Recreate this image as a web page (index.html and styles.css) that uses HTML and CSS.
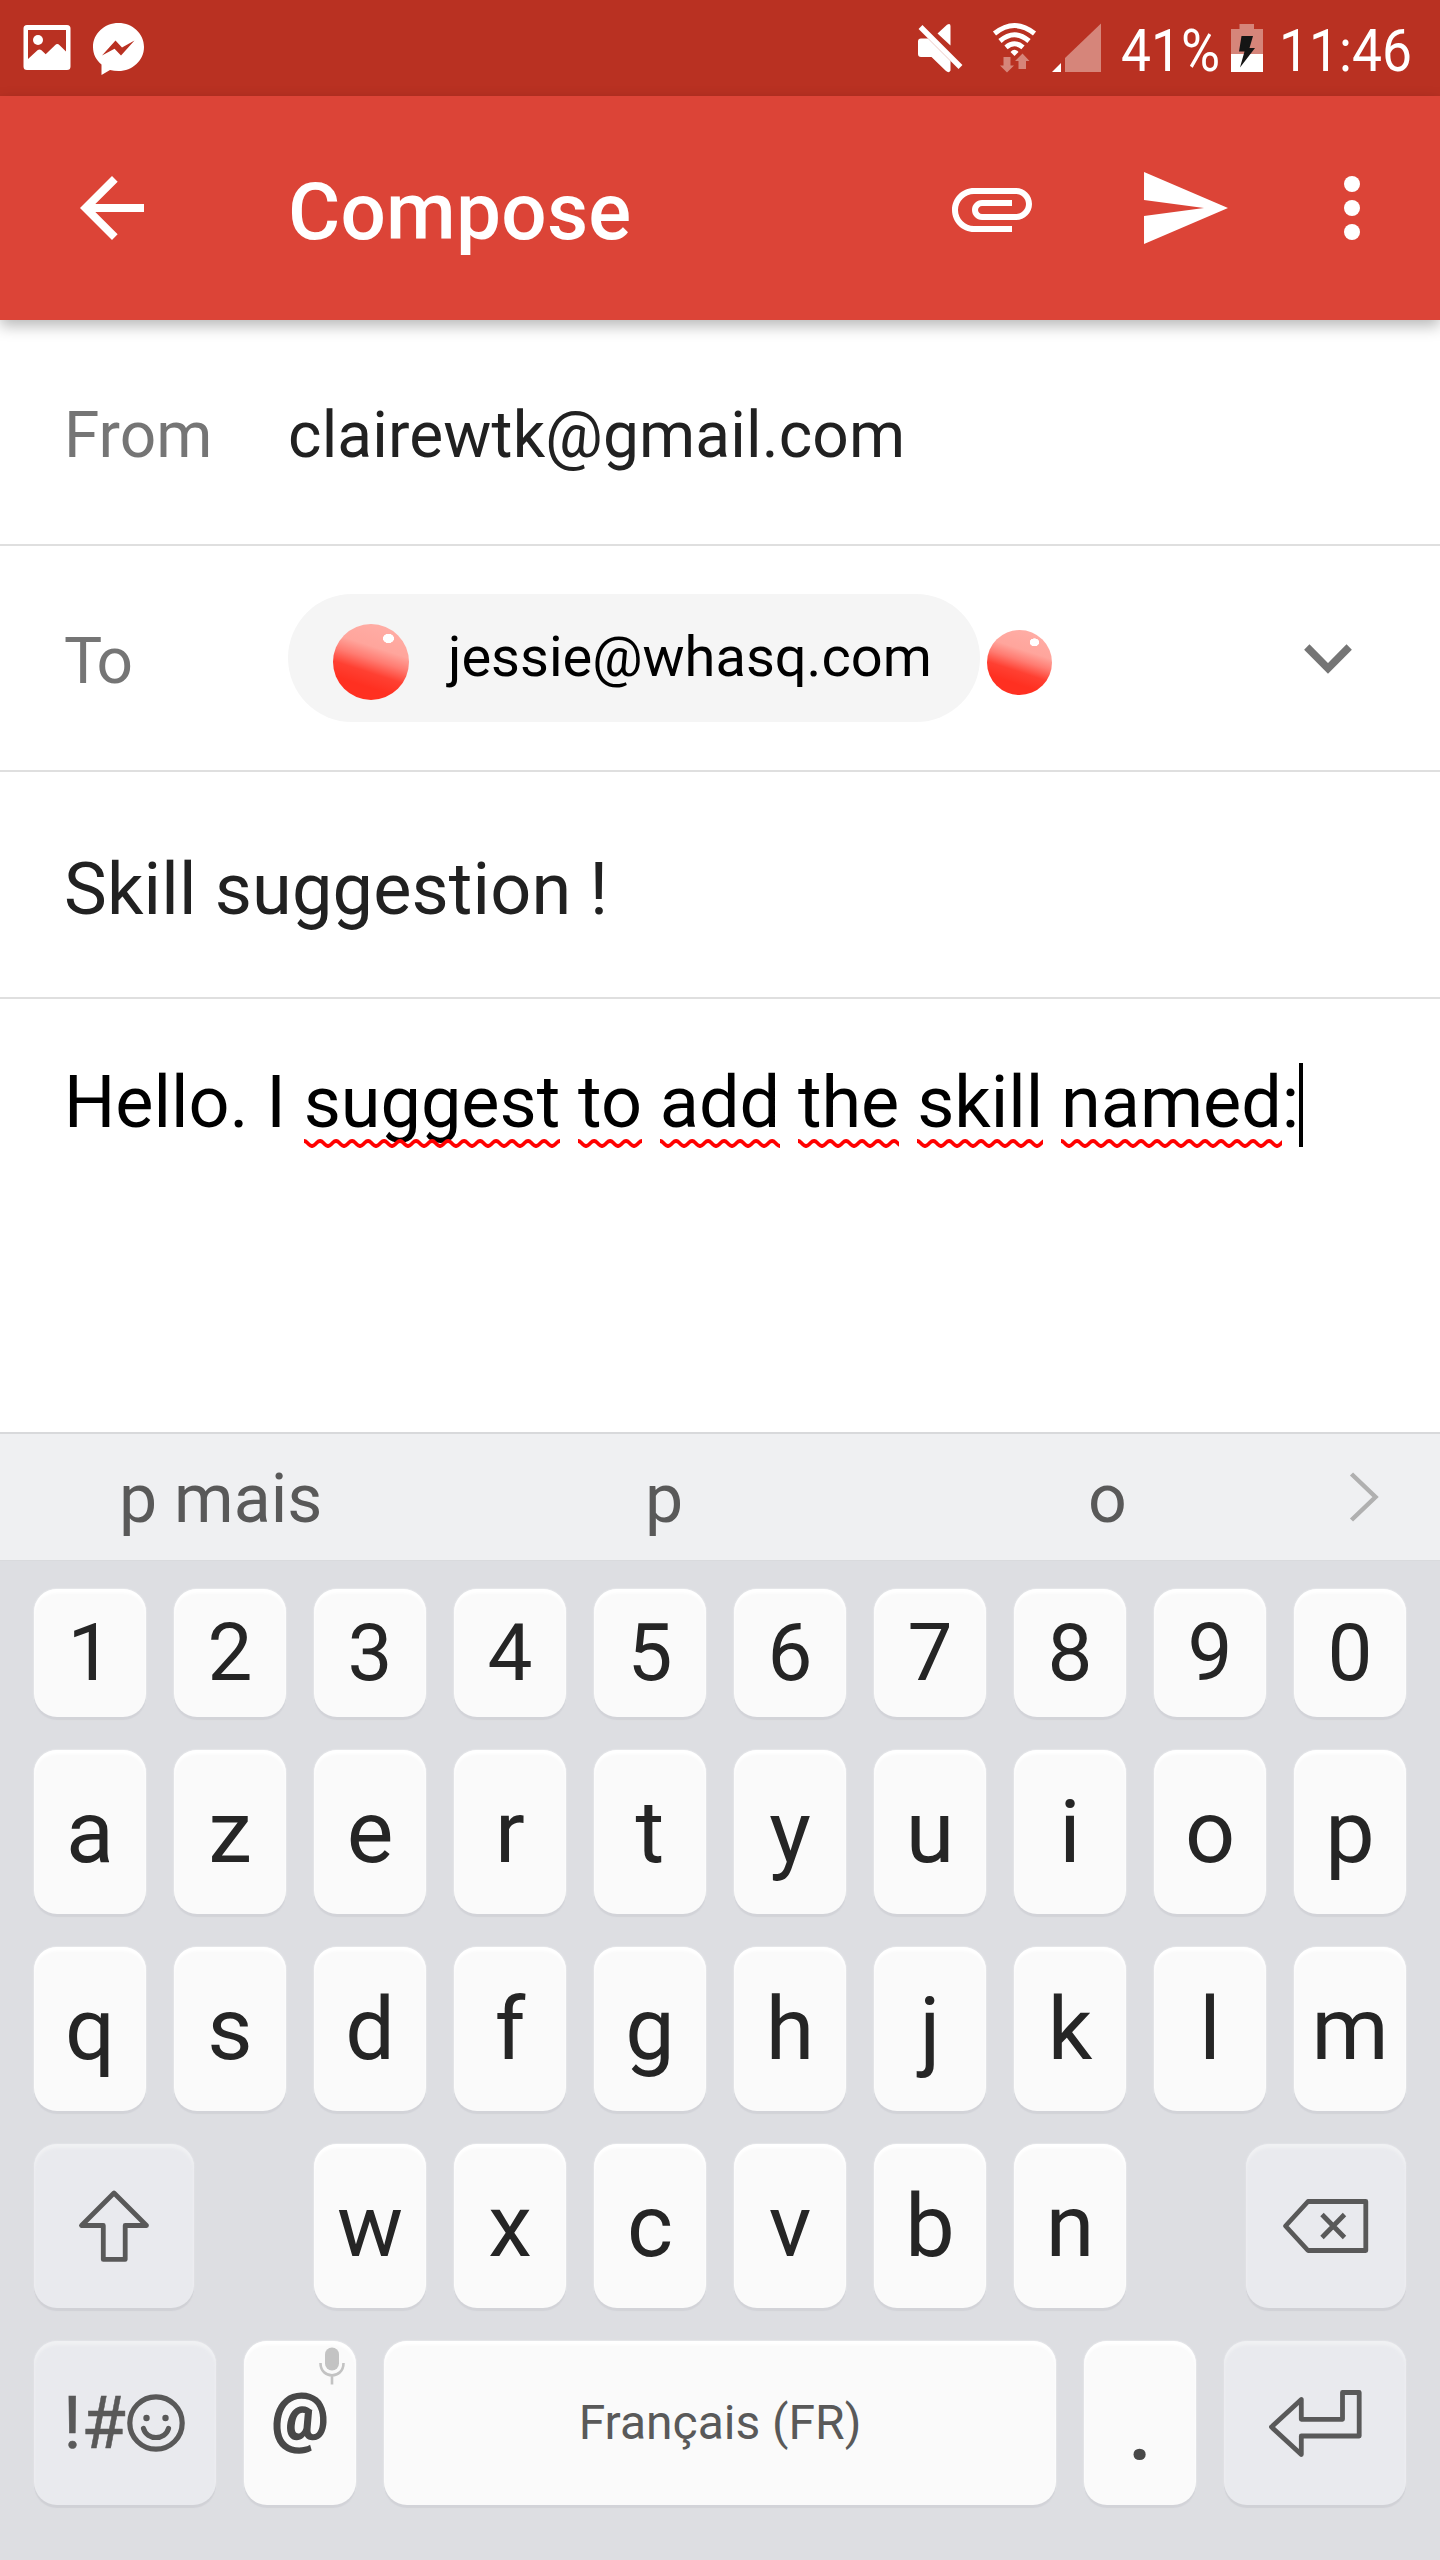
FILE: index.html
```html
<!DOCTYPE html>
<html lang="en">
<head>
<meta charset="utf-8">
<title>Compose</title>
<link rel="stylesheet" href="styles.css">
</head>
<body>
<div class="screen">
  <header class="status">
    <svg class="status-left" width="160" height="96" viewBox="0 0 160 96" fill="#fff">
      <path fill-rule="evenodd" d="M27 25H67a3.500 3.500 0 0 1 3.500 3.500V66.500a3.500 3.500 0 0 1-3.500 3.500H27a3.500 3.500 0 0 1-3.500-3.500V28.500A3.500 3.500 0 0 1 27 25zM28 30V59L37.500 50.200Q39.500 48.700 41.500 50.200L45.700 54.300L55 45.200Q57.300 43 59.600 45.200L66 51.500V30z"/>
      <circle cx="38" cy="40" r="5"/>
      <path fill-rule="evenodd" d="M118.500 23C132.500 23 144 33.500 144 47S132.500 71 118.500 71Q114 71 110 70L101.500 75V64.500C96 60 93 54 93 47C93 33.500 104.500 23 118.500 23zM102 55.500L115.500 40.500L122 47.500L134.500 40.500L121 55.500L114.500 48.700z"/>
    </svg>
    <svg class="status-right" width="320" height="96" viewBox="900 0 320 96" fill="#fff">
      <path d="M918 41.500q0-3 3-3h7L950.500 61V70.500q-1.500 3-4.500 .5L931.500 57H921q-3 0-3-3zM937.500 33.500L947 24.700q3.500-1.700 3.500 1.300V45.500z"/>
      <path d="M920.500 27L960.500 67" stroke="#fff" stroke-width="5.500"/>
      <g fill="none" stroke="#fff" stroke-width="5">
        <path d="M994.500 33.500Q1014.500 17.500 1034.500 33.500"/>
        <path d="M1000 41Q1014.500 28.500 1029 41"/>
        <path d="M1006 47.300Q1014.500 40.200 1023 47.300"/>
      </g>
      <path d="M1010.500 52Q1014.500 47.500 1018.500 52L1014.500 56z"/>
      <path fill="#d6857a" d="M1003.500 57h7v8.500h3.500L1007 72.500L1000 65.500h3.500zM1018.500 69v-8H1015l7.500-7.500L1029.500 61H1026v8z"/>
      <path fill="#d6857a" d="M1101 23.500V72H1065V58z"/>
      <path d="M1052 72L1061 63V72z"/>
    </svg>
    <div class="pct"><span>41%</span></div>
    <svg class="battery" width="32" height="96" viewBox="1231 0 32 96">
      <path fill="#d6857a" d="M1239.500 24h14.500v5h9v26h-32v-26h8.500z"/>
      <path fill="#fff" d="M1231 54h32v18h-32z"/>
      <path fill="#151515" d="M1241.500 36H1253L1249.500 48H1255L1240 67.500L1244.500 51.500H1239z"/>
    </svg>
    <div class="clock"><span>11:46</span></div>
  </header>

  <div class="appbar">
    <svg class="back" width="96" height="96" viewBox="0 0 24 24" fill="#fff"><path d="M20 11H7.830l5.590-5.590L12 4l-8 8 8 8 1.410-1.410L7.830 13H20v-2z"/></svg>
    <h1 class="title">Compose</h1>
    <svg class="attach" width="96" height="96" viewBox="0 0 24 24" fill="#fff"><path d="M7.500 18C4.460 18 2 15.540 2 12.500S4.460 7 7.500 7H18c2.210 0 4 1.790 4 4s-1.790 4-4 4H9.500C8.120 15 7 13.880 7 12.500S8.120 10 9.500 10H17v1.500H9.500c-.55 0-1 .45-1 1s.45 1 1 1H18c1.380 0 2.500-1.120 2.500-2.500S19.380 8.500 18 8.500H7.500c-2.210 0-4 1.790-4 4s1.790 4 4 4H17V18H7.500z"/></svg>
    <svg class="send" width="96" height="96" viewBox="0 0 24 24" fill="#fff"><path d="M2.010 21L23 12 2.010 3 2 10l15 2-15 2z"/></svg>
    <svg class="more" width="96" height="96" viewBox="0 0 24 24" fill="#fff"><circle cx="12" cy="6" r="2"/><circle cx="12" cy="12" r="2"/><circle cx="12" cy="18" r="2"/></svg>
  </div>

  <main class="form">
    <div class="row"><span class="label">From</span><span class="value">clairewtk@gmail.com</span></div>
    <div class="row">
      <span class="label to">To</span>
      <div class="chip"><i class="ball"></i><span>jessie@whasq.com</span></div>
      <i class="ball small"></i>
      <svg class="expand" width="48" height="30" viewBox="0 0 48 30"><path d="M2.800 3L24 24.500L45.200 3" fill="none" stroke="#757575" stroke-width="7.500"/></svg>
    </div>
    <div class="row subject">Skill suggestion !</div>
    <div class="body-text"><span>Hello. I </span><span class="sp">suggest</span><span> </span><span class="sp">to</span><span> </span><span class="sp">add</span><span> </span><span class="sp">the</span><span> </span><span class="sp">skill</span><span> </span><span class="sp">named</span><span>:</span><i class="cursor"></i></div>
  </main>

  <div class="suggest">
    <span>p mais</span><span>p</span><span>o</span>
    <svg width="110" height="60" viewBox="1330 1466 110 60"><path d="M1351.500 1473L1375.500 1496L1351.500 1519" fill="none" stroke="#b0b0b0" stroke-width="4.500"/></svg>
  </div>

  <div class="keyboard">
    <div class="keys nums"><b>1</b><b>2</b><b>3</b><b>4</b><b>5</b><b>6</b><b>7</b><b>8</b><b>9</b><b>0</b></div>
    <div class="keys"><b>a</b><b>z</b><b>e</b><b>r</b><b>t</b><b>y</b><b>u</b><b>i</b><b>o</b><b>p</b></div>
    <div class="keys"><b>q</b><b>s</b><b>d</b><b>f</b><b>g</b><b>h</b><b>j</b><b>k</b><b>l</b><b>m</b></div>
    <div class="keys spread">
      <b class="fn shift"><svg width="160" height="164" viewBox="0 0 160 164"><path d="M80 49L47.500 81.500H69.300V115.400H91.200V81.500H112.500z"/></svg></b>
      <div class="keys"><b>w</b><b>x</b><b>c</b><b>v</b><b>b</b><b>n</b></div>
      <b class="fn del"><svg width="160" height="164" viewBox="0 0 160 164"><path d="M39.500 82L62 57.500H119.800V106.500H62zM76 70.500L98.500 93.500M98.500 70.500L76 93.500"/></svg></b>
    </div>
    <div class="keys">
      <b class="fn wide sym"><span>!#</span><svg width="60" height="60" viewBox="0 0 60 60"><circle cx="30" cy="30" r="26.200"/><path d="M17.500 35.500C21 47.500 39 47.500 42.500 35.500"/><g class="eyes"><circle cx="20.500" cy="25" r="3.200"/><circle cx="39.500" cy="25" r="3.200"/></g></svg></b>
      <b class="at"><span>@</span><svg class="mic" width="26" height="38" viewBox="0 0 26 38"><rect x="6" y="0.500" width="14" height="23" rx="7" fill="#c3c3c3"/><path d="M1.500 16C1.500 32.500 24.500 32.500 24.500 16M13 28.500V37.500" fill="none" stroke="#c3c3c3" stroke-width="2.600"/></svg></b>
      <b class="space">Français (FR)</b>
      <b class="dot"><span>.</span></b>
      <b class="fn wide"><svg width="182" height="164" viewBox="0 0 182 164"><path d="M47.500 86L77.300 58.500V78.300H118.500V51.500H135.200V95H77.300V113.500z"/></svg></b>
    </div>
  </div>
</div>
</body>
</html>
```
FILE: styles.css
```css
* { box-sizing: border-box; }
body { margin: 0; font-family: Roboto, "Liberation Sans", sans-serif; background: #fff; }
.screen { width: 1440px; height: 2560px; display: flex; flex-direction: column; overflow: hidden; }
svg { display: block; flex: none; }

.status { height: 96px; flex: none; background: #b93122; color: #fff; display: flex; overflow: hidden; }
.status-right { margin-left: 740px; }
.pct, .clock { font-size: 60px; line-height: 101px; white-space: nowrap; }
.pct { width: 110px; margin-left: -99px; }
.clock { width: 140px; margin-left: 16px; }
.pct span, .clock span { display: inline-block; transform-origin: 0 50%; transform: scaleX(.89); }

.appbar { height: 224px; flex: none; background: #dc4437; color: #fff; display: flex; align-items: center; padding-left: 64px; position: relative; box-shadow: 0 6px 14px rgba(0, 0, 0, .28); }
.title { margin: 0 0 0 128px; width: 656px; font-size: 80px; font-weight: 500; line-height: 232px; height: 224px; letter-spacing: .25px; }
.send { margin-left: 96px; }
.more { margin-left: 72px; }

.form { height: 1112px; flex: none; }
.row { height: 226px; border-bottom: 2px solid #dfdfdf; padding-left: 64px; display: flex; align-items: center; font-size: 64px; color: #212121; }
.label { width: 224px; color: #757575; line-height: 232px; height: 224px; }
.to { letter-spacing: -2.500px; }
.value { line-height: 232px; height: 224px; letter-spacing: .15px; }
.chip { width: 692px; height: 128px; border-radius: 64px; background: #f5f5f5; padding-left: 45px; display: flex; align-items: center; color: #000; font-size: 56px; line-height: 127px; }
.chip span { height: 128px; margin-left: 39px; white-space: nowrap; }
.ball { width: 76px; height: 76px; border-radius: 50%; margin-top: 7px; flex: none;
  background: radial-gradient(ellipse 7.600% 6.400% at 73% 19%, #fff 90%, transparent 100%), linear-gradient(198deg, #ffaca4 12%, #ffa59c 34%, #ff7c72 47%, #ff4032 61%, #ff3021 76%); }
.ball.small { width: 65px; height: 65px; margin-left: 7px; margin-top: 9px; }
.expand { margin-left: 252px; margin-top: 1px; }
.subject { height: 227px; padding-top: 10px; font-size: 72px; letter-spacing: .18px; }
.body-text { padding: 62px 0 0 64px; display: flex; font-size: 72px; line-height: 84px; color: #000; white-space: pre; letter-spacing: -.02px; }
.sp { position: relative; }
.sp::after { content: ""; position: absolute; left: 0; right: 0; top: 78px; height: 9px;
  background: url("data:image/svg+xml,%3Csvg xmlns='http://www.w3.org/2000/svg' width='16' height='9'%3E%3Cpath d='M-3 3.500Q0 .5 3 3.500L5 5.500Q8 8.500 11 5.500L13 3.500Q16 .5 19 3.500' fill='none' stroke='red' stroke-width='3.800'/%3E%3C/svg%3E") repeat-x; }
.cursor { width: 4px; height: 84px; margin: 2px 0 0; background: #000; }

.suggest { height: 128px; flex: none; border-top: 2px solid #d8d9db; background: #eff0f2; color: #595959; font-size: 68px; line-height: 131px; display: flex; align-items: center; }
.suggest span { width: 443.400px; height: 126px; text-align: center; position: relative; left: -1px; }

.keyboard { flex: 1; background: #dddee2; padding: 28px 34px 0; display: flex; flex-direction: column; gap: 33px; border-top: 1px solid #d9dadd; }
.keys { display: flex; gap: 28px; }
.spread { justify-content: space-between; }
.spread .keys { padding-left: 68px; }
.spread .del { margin-left: 68px; }
.keys b { width: 112px; height: 164px; border-radius: 23px; background: #fafafa; color: #252525; font-size: 88px; font-weight: 400; line-height: 164px; text-align: center; flex: none; position: relative;
  box-shadow: 0 3px 1px #d2d3d8, 0 0 1px 1px #e6e7ea, inset 0 4px 3px #fff; }
.keys.nums b { height: 128px; line-height: 128px; font-size: 80px; }
.keys b.fn { width: 160px; background: #e9eaee; color: #595959;
  box-shadow: 0 3px 1px #d0d1d6, 0 0 1px 1px #e2e3e7, inset 0 4px 3px #f0f1f3; }
.keys b.wide { width: 182px; }
.fn svg { fill: none; stroke: #595959; stroke-width: 4.800px; stroke-linejoin: round; stroke-linecap: butt; }
.keys b.sym { display: flex; align-items: center; font-size: 72px; line-height: 165px; padding-left: 29px; }
.sym span { -webkit-text-stroke: .5px #595959; }
.sym svg { margin-left: 0; stroke-width: 5.200px; stroke-linecap: round; }
.sym .eyes { fill: #595959; stroke: none; }
.keys b.at { color: #484848; font-size: 64px; font-weight: 500; line-height: 153px; }
.at span { -webkit-text-stroke: 1.600px #484848; }
.mic { position: absolute; left: 75px; top: 6px; }
.keys b.space { width: 672px; color: #595959; font-size: 48px; }
.keys b.dot { color: #484848; font-weight: 500; line-height: 176px; }
```
